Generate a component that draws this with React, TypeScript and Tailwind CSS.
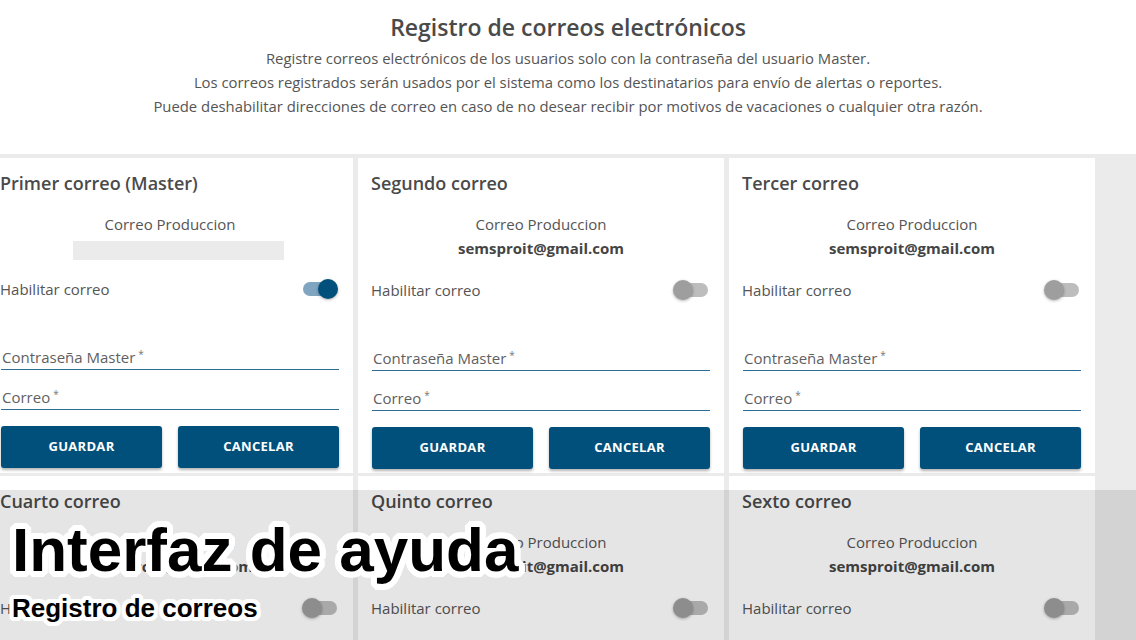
import React from 'react';

interface CardProps {
  title: string;
  email?: string;
  enabled?: boolean;
}

// white outline around the help caption, drawn with shadows in many directions
const outline =
  '[text-shadow:6px_0_0_#fff,-6px_0_0_#fff,0_6px_0_#fff,0_-6px_0_#fff,5px_3px_0_#fff,-5px_3px_0_#fff,5px_-3px_0_#fff,-5px_-3px_0_#fff,3px_5px_0_#fff,-3px_5px_0_#fff,3px_-5px_0_#fff,-3px_-5px_0_#fff,4px_4px_0_#fff,-4px_4px_0_#fff,4px_-4px_0_#fff,-4px_-4px_0_#fff,6px_2px_0_#fff,-6px_2px_0_#fff,6px_-2px_0_#fff,-6px_-2px_0_#fff,2px_6px_0_#fff,-2px_6px_0_#fff,2px_-6px_0_#fff,-2px_-6px_0_#fff]';

const outlineSmall =
  '[text-shadow:4px_0_0_#fff,-4px_0_0_#fff,0_4px_0_#fff,0_-4px_0_#fff,3px_3px_0_#fff,-3px_3px_0_#fff,3px_-3px_0_#fff,-3px_-3px_0_#fff,2px_4px_0_#fff,-2px_4px_0_#fff,2px_-4px_0_#fff,-2px_-4px_0_#fff,4px_2px_0_#fff,-4px_2px_0_#fff,4px_-2px_0_#fff,-4px_-2px_0_#fff]';

const Toggle: React.FC<{ on?: boolean }> = ({ on }) => (
  <div className="relative w-[36px] h-[20px] flex items-center">
    <div
      className={`w-[34px] h-[14px] rounded-full ml-[1px] ${on ? 'bg-[#7fa5c0]' : 'bg-[#bdbdbd]'}`}
    />
    <div
      className={`absolute top-0 w-[20px] h-[20px] rounded-full shadow-[0_1px_3px_rgba(0,0,0,0.3)] ${
        on ? 'right-0 bg-[#01507c]' : 'left-0 bg-[#9e9e9e]'
      }`}
    />
  </div>
);

const Field: React.FC<{ label: string; className?: string }> = ({ label, className }) => (
  <div
    className={`h-[34px] flex items-end pb-[2px] border-b border-[#2c6c95] ${className ?? ''}`}
  >
    <span className="text-[15px] leading-[20px] text-[#5f5f5f] px-[1px]">
      {label}
      <sup className="text-[10px] ml-[3px] text-[#777]">*</sup>
    </span>
  </div>
);

const EmailCard: React.FC<CardProps> = ({ title, email, enabled }) => (
  <div className="w-[366px] h-[315px] bg-white px-[14px] pt-[13px] flex flex-col shrink-0">
    <h2 className="text-[18px] leading-[24px] font-semibold text-[#4a4a4a] -ml-[1px]">{title}</h2>
    <p className="mt-[17px] text-center text-[15px] leading-[24px] text-[#555]">Correo Produccion</p>
    {email ? (
      <p className="text-center text-[15px] leading-[25px] font-bold text-[#444]">{email}</p>
    ) : (
      <div className="mx-auto mt-[5px] w-[211px] h-[19px] bg-[#ebebeb] translate-x-[8px]" />
    )}
    <div className="mt-[17px] flex items-center justify-between pr-[1px]">
      <span className="text-[15px] leading-[24px] text-[#555] -ml-[1px]">Habilitar correo</span>
      <Toggle on={enabled} />
    </div>
    <Field label="Contraseña Master" className="mt-[35px]" />
    <Field label="Correo" className="mt-[6px]" />
    <div className="mt-[16px] grid grid-cols-2 gap-[16px]">
      <button
        type="button"
        className="h-[42px] rounded-[3px] bg-[#01507c] text-white text-[13px] font-bold tracking-[0.3px] shadow-[0_2px_3px_rgba(0,0,0,0.3)]"
      >
        GUARDAR
      </button>
      <button
        type="button"
        className="h-[42px] rounded-[3px] bg-[#01507c] text-white text-[13px] font-bold tracking-[0.3px] shadow-[0_2px_3px_rgba(0,0,0,0.3)]"
      >
        CANCELAR
      </button>
    </div>
  </div>
);

const cards: CardProps[] = [
  { title: 'Primer correo (Master)', enabled: true },
  { title: 'Segundo correo', email: 'semsproit@gmail.com' },
  { title: 'Tercer correo', email: 'semsproit@gmail.com' },
  { title: 'Cuarto correo', email: 'semsproit@gmail.com' },
  { title: 'Quinto correo', email: 'semsproit@gmail.com' },
  { title: 'Sexto correo', email: 'semsproit@gmail.com' },
];

export default function App() {
  return (
    <div className="relative w-[1136px] h-[640px] overflow-hidden bg-white font-['Open_Sans',sans-serif]">
      {/* HEADER */}
      <div className="h-[154px] pt-[12px] flex flex-col items-center text-center">
        <h1 className="text-[23px] leading-[31px] font-semibold text-[#4a4a4a]">
          Registro de correos electrónicos
        </h1>
        <div className="mt-[3px] text-[14.85px] leading-[24px] text-[#555]">
          <p>Registre correos electrónicos de los usuarios solo con la contraseña del usuario Master.</p>
          <p>Los correos registrados serán usados por el sistema como los destinatarios para envío de alertas o reportes.</p>
          <p>Puede deshabilitar direcciones de correo en caso de no desear recibir por motivos de vacaciones o cualquier otra razón.</p>
        </div>
      </div>
      {/* CARDS */}
      <div className="bg-[#ebebeb] pt-[4px] h-[486px]">
        <div className="-ml-[13px] w-[1110px] flex flex-wrap gap-x-[5px] gap-y-[3px]">
          {cards.map((card) => (
            <EmailCard key={card.title} {...card} />
          ))}
        </div>
      </div>
      {/* HELP OVERLAY */}
      <div className="absolute left-0 right-0 top-[490px] bottom-0 bg-black/10 pl-[12px] font-['Liberation_Sans',Arial,sans-serif] font-bold text-black">
        <div className={`mt-[29px] text-[62px] leading-[62px] ${outline}`}>
          Interfaz de ayuda
        </div>
        <div className={`mt-[14px] text-[26px] leading-[26px] ${outlineSmall}`}>
          Registro de correos
        </div>
      </div>
    </div>
  );
}
